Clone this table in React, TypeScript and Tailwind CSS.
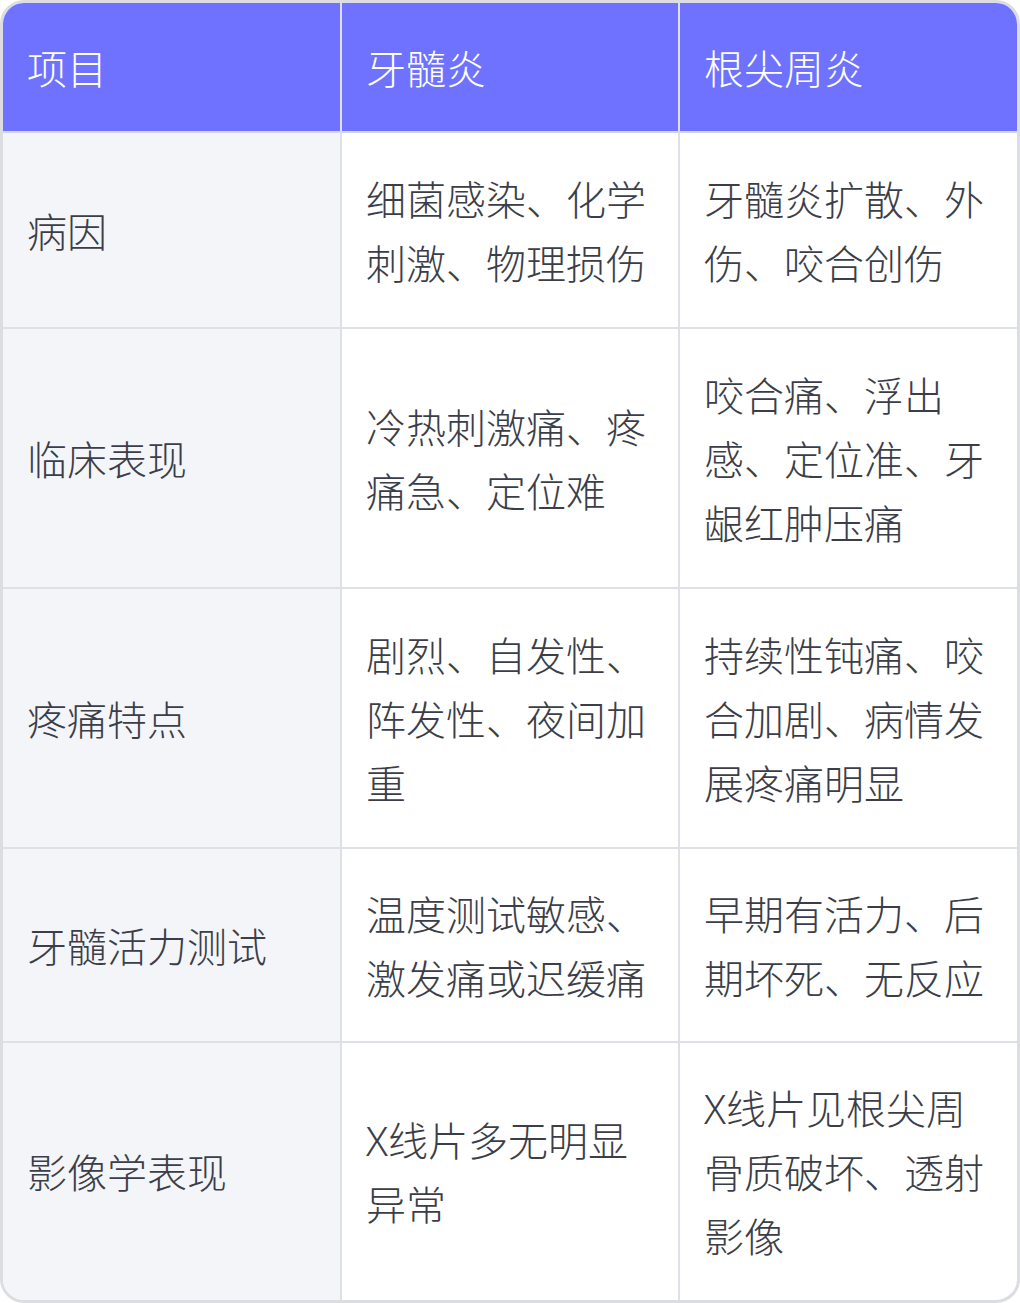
const head = ["项目", "牙髓炎", "根尖周炎"]

const rows = [
    { cells: ["病因", "细菌感染、化学刺激、物理损伤", "牙髓炎扩散、外伤、咬合创伤"], pad: "pt-[35px] pb-[31px]" },
    { cells: ["临床表现", "冷热刺激痛、疼痛急、定位难", "咬合痛、浮出感、定位准、牙龈红肿压痛"], pad: "pt-[35px] pb-[31px]" },
    { cells: ["疼痛特点", "剧烈、自发性、阵发性、夜间加重", "持续性钝痛、咬合加剧、病情发展疼痛明显"], pad: "pt-[35px] pb-[31px]" },
    { cells: ["牙髓活力测试", "温度测试敏感、激发痛或迟缓痛", "早期有活力、后期坏死、无反应"], pad: "pt-[34px] pb-[30px]" },
    { cells: ["影像学表现", "X线片多无明显异常", "X线片见根尖周骨质破坏、透射影像"], pad: "pt-[34px] pb-[31px]" },
]

export default function App() {
    return (
        <div
            className="w-[1020px] h-[1303px] bg-white"
            style={{ fontFamily: '"Noto Sans", "Noto Sans CJK SC", sans-serif' }}
        >
            <div className="rounded-[24px] border-[3px] border-[#dcdde2] overflow-hidden">
                <table className="w-full table-fixed border-collapse text-[40px] leading-[64px] font-light">
                    <thead>
                        <tr className="bg-[#6e72fe] text-white">
                            {head.map((h, i) => (
                                <th
                                    key={h}
                                    className={`px-6 pt-[34px] pb-[30px] text-left font-light border-b-2 border-[#d4d5ee] ${i > 0 ? 'border-l-2 border-l-[#dfe0e5]' : ''}`}
                                >
                                    {h}
                                </th>
                            ))}
                        </tr>
                    </thead>
                    <tbody className="text-[#3b3e48]">
                        {rows.map((r, ri) => (
                            <tr key={r.cells[0]} className={ri < rows.length - 1 ? 'border-b-2 border-[#dfe0e5]' : ''}>
                                <td className={`px-6 ${r.pad} align-middle bg-[#f4f5f9]`}>{r.cells[0]}</td>
                                <td className={`px-6 ${r.pad} align-middle border-l-2 border-[#dfe0e5]`}>{r.cells[1]}</td>
                                <td className={`px-6 ${r.pad} align-middle border-l-2 border-[#dfe0e5]`}>{r.cells[2]}</td>
                            </tr>
                        ))}
                    </tbody>
                </table>
            </div>
        </div>
    )
}
